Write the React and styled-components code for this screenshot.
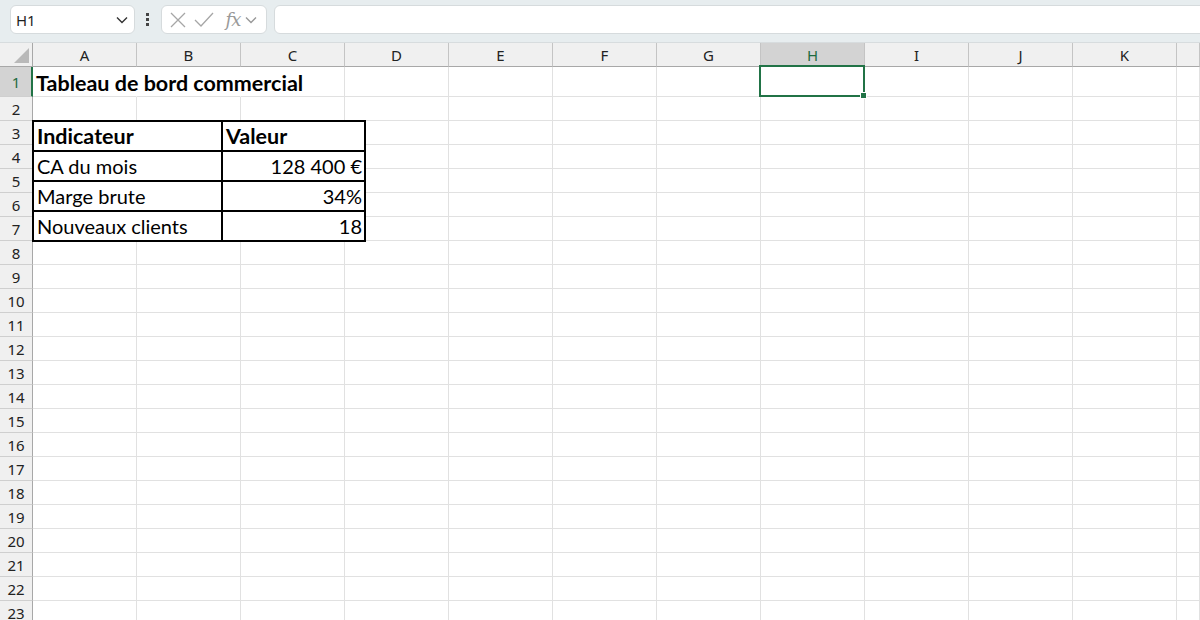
import styled, { createGlobalStyle } from 'styled-components';

const COLS = ['A', 'B', 'C', 'D', 'E', 'F', 'G', 'H', 'I', 'J', 'K'];
const ROWS = Array.from({ length: 23 }, (_, i) => i + 1);

const SUMMARY = [
  { label: 'CA du mois', value: '128 400 €' },
  { label: 'Marge brute', value: '34%' },
  { label: 'Nouveaux clients', value: '18' },
];

const GlobalStyle = createGlobalStyle`
  html, body {
    margin: 0;
    padding: 0;
    background: #fff;
    overflow: hidden;
  }
  body {
    font-family: "Noto Sans", "Open Sans", sans-serif;
  }
`;

const Screen = styled.div`
  width: 1200px;
  height: 620px;
  overflow: hidden;
  display: flex;
  flex-direction: column;
  background: #fff;
`;

const TopBar = styled.div`
  height: 43px;
  flex: none;
  display: flex;
  align-items: center;
  padding: 0 0 3px 10px;
  box-sizing: border-box;
  background: #e7edef;
  border-bottom: 1px solid #d7dcde;
`;

const Field = styled.div`
  height: 29px;
  box-sizing: border-box;
  background: #fff;
  border: 1px solid #d6dbdd;
  border-radius: 6px;
  display: flex;
  align-items: center;
`;

const NameBox = styled(Field)`
  width: 125px;
  justify-content: space-between;
  padding: 0 6px 0 5px;
  font-size: 15px;
  color: #1f1f1f;
`;

const Kebab = styled.div`
  display: flex;
  flex-direction: column;
  gap: 2px;
  margin: 0 12px 0 11px;

  span {
    width: 3px;
    height: 3px;
    background: #444;
  }
`;

const FuncBox = styled(Field)`
  width: 106px;
  padding-left: 7px;
`;

const IconSlot = styled.span`
  display: flex;
  align-items: center;
  justify-content: center;
  width: ${(p) => p.$w}px;
`;

const Fx = styled.span`
  font-family: "DejaVu Serif", "Liberation Serif", serif;
  font-style: italic;
  font-size: 18px;
  color: #9a9a9a;
  letter-spacing: -1px;
  width: 24px;
  text-align: center;
`;

const FormulaInput = styled(Field)`
  flex: 1;
  margin: 0 -8px 0 7px;
`;

const Sheet = styled.div`
  position: relative;
  flex: 1;
  overflow: hidden;
`;

const Line = styled.div`
  display: flex;
  height: ${(p) => p.$h}px;
  box-sizing: border-box;
`;

const Corner = styled.div`
  flex: none;
  width: 33px;
  box-sizing: border-box;
  background: #f0f0f0;
  border-right: 1px solid #a8a8a8;
  border-bottom: 1px solid #a8a8a8;
  display: flex;
`;

const ColHead = styled.div`
  flex: ${(p) => (p.$fill ? '1' : 'none')};
  width: 104px;
  box-sizing: border-box;
  background: ${(p) => (p.$active ? '#d3d3d3' : '#f0f0f0')};
  color: ${(p) => (p.$active ? '#1d6b40' : '#222')};
  border-right: 1px solid #c4c4c4;
  border-bottom: 1px solid #a8a8a8;
  font-size: 15px;
  display: flex;
  align-items: center;
  justify-content: center;
`;

const RowHead = styled.div`
  flex: none;
  width: 33px;
  box-sizing: border-box;
  background: ${(p) => (p.$active ? '#d3d3d3' : '#f0f0f0')};
  color: ${(p) => (p.$active ? '#1d6b40' : '#222')};
  border-right: ${(p) => (p.$active ? '2px solid #217346' : '1px solid #a8a8a8')};
  border-bottom: 1px solid #cfcfcf;
  font-size: 15px;
  display: flex;
  align-items: center;
  justify-content: center;
  padding-left: ${(p) => (p.$active ? '1px' : '0')};
`;

const Cell = styled.div`
  flex: ${(p) => (p.$fill ? '1' : 'none')};
  position: relative;
  width: 104px;
  box-sizing: border-box;
  border-right: 1px solid ${(p) => (p.$spill ? 'transparent' : '#e1e1e1')};
  border-bottom: 1px solid #e1e1e1;
`;

const Title = styled.div`
  position: absolute;
  left: 3px;
  bottom: 1px;
  white-space: nowrap;
  font-family: Lato, "Liberation Sans", sans-serif;
  font-weight: 700;
  font-size: 21.5px;
  line-height: 24px;
  color: #000;
  z-index: 1;
`;

const Selection = styled.div`
  position: absolute;
  top: -2px;
  left: -2px;
  right: -1px;
  bottom: -1px;
  border: 2px solid #217346;
  z-index: 2;
`;

const Handle = styled.div`
  position: absolute;
  right: -3px;
  bottom: -3px;
  width: 5px;
  height: 5px;
  background: #217346;
  box-shadow: 0 0 0 1px #fff;
`;

const Summary = styled.table`
  position: absolute;
  top: 77px;
  left: 32px;
  border-collapse: separate;
  border-spacing: 0;
  table-layout: fixed;
  width: 334px;
  background: #fff;
  border-top: 2px solid #000;
  border-left: 2px solid #000;
  font-family: Lato, "Liberation Sans", sans-serif;
  font-size: 20px;
  color: #000;
  z-index: 1;
`;

const Td = styled.td`
  height: 30px;
  box-sizing: border-box;
  padding: 0 2px 0 3px;
  border-right: 2px solid #000;
  border-bottom: 2px solid #000;
  white-space: nowrap;
  line-height: 28px;
  text-align: ${(p) => (p.$num ? 'right' : 'left')};
  font-weight: ${(p) => (p.$head ? 700 : 400)};
  font-size: ${(p) => (p.$head ? '21.5px' : '20px')};
`;

function Chevron({ color = '#333', w = 12 }) {
  return (
    <svg width={w} height="8" viewBox="0 0 12 8">
      <path d="M1 1.5 L6 6.5 L11 1.5" fill="none" stroke={color} strokeWidth="1.4" />
    </svg>
  );
}

export default function App() {
  return (
    <Screen>
      <GlobalStyle />
      <TopBar>
        <NameBox>
          <span>H1</span>
          <Chevron />
        </NameBox>
        <Kebab>
          <span />
          <span />
          <span />
        </Kebab>
        <FuncBox>
          <IconSlot $w={18}>
            <svg width="16" height="16" viewBox="0 0 16 16">
              <path d="M1 1 L15 15 M15 1 L1 15" stroke="#a6a6a6" strokeWidth="1.3" />
            </svg>
          </IconSlot>
          <IconSlot $w={34}>
            <svg width="20" height="15" viewBox="0 0 20 15">
              <path d="M1 8 L7 14 L19 1" fill="none" stroke="#a6a6a6" strokeWidth="1.3" />
            </svg>
          </IconSlot>
          <Fx>fx</Fx>
          <Chevron color="#999" w={12} />
        </FuncBox>
        <FormulaInput />
      </TopBar>

      <Sheet>
        <Line $h={24}>
          <Corner>
            <svg width="32" height="23" viewBox="0 0 32 23">
              <polygon points="29,5 29,20 14,20" fill="#b9b9b9" />
            </svg>
          </Corner>
          {COLS.map((c) => (
            <ColHead key={c} $active={c === 'H'}>
              {c}
            </ColHead>
          ))}
          <ColHead $fill />
        </Line>

        {ROWS.map((r) => (
          <Line key={r} $h={r === 1 ? 30 : 24}>
            <RowHead $active={r === 1}>{r}</RowHead>
            {COLS.map((c) => (
              <Cell key={c} $spill={r === 1 && (c === 'A' || c === 'B')}>
                {r === 1 && c === 'A' && <Title>Tableau de bord commercial</Title>}
                {r === 1 && c === 'H' && (
                  <Selection>
                    <Handle />
                  </Selection>
                )}
              </Cell>
            ))}
            <Cell $fill />
          </Line>
        ))}

        <Summary>
          <colgroup>
            <col style={{ width: 189 }} />
            <col style={{ width: 143 }} />
          </colgroup>
          <tbody>
            <tr>
              <Td $head>Indicateur</Td>
              <Td $head>Valeur</Td>
            </tr>
            {SUMMARY.map((row) => (
              <tr key={row.label}>
                <Td>{row.label}</Td>
                <Td $num>{row.value}</Td>
              </tr>
            ))}
          </tbody>
        </Summary>
      </Sheet>
    </Screen>
  );
}
